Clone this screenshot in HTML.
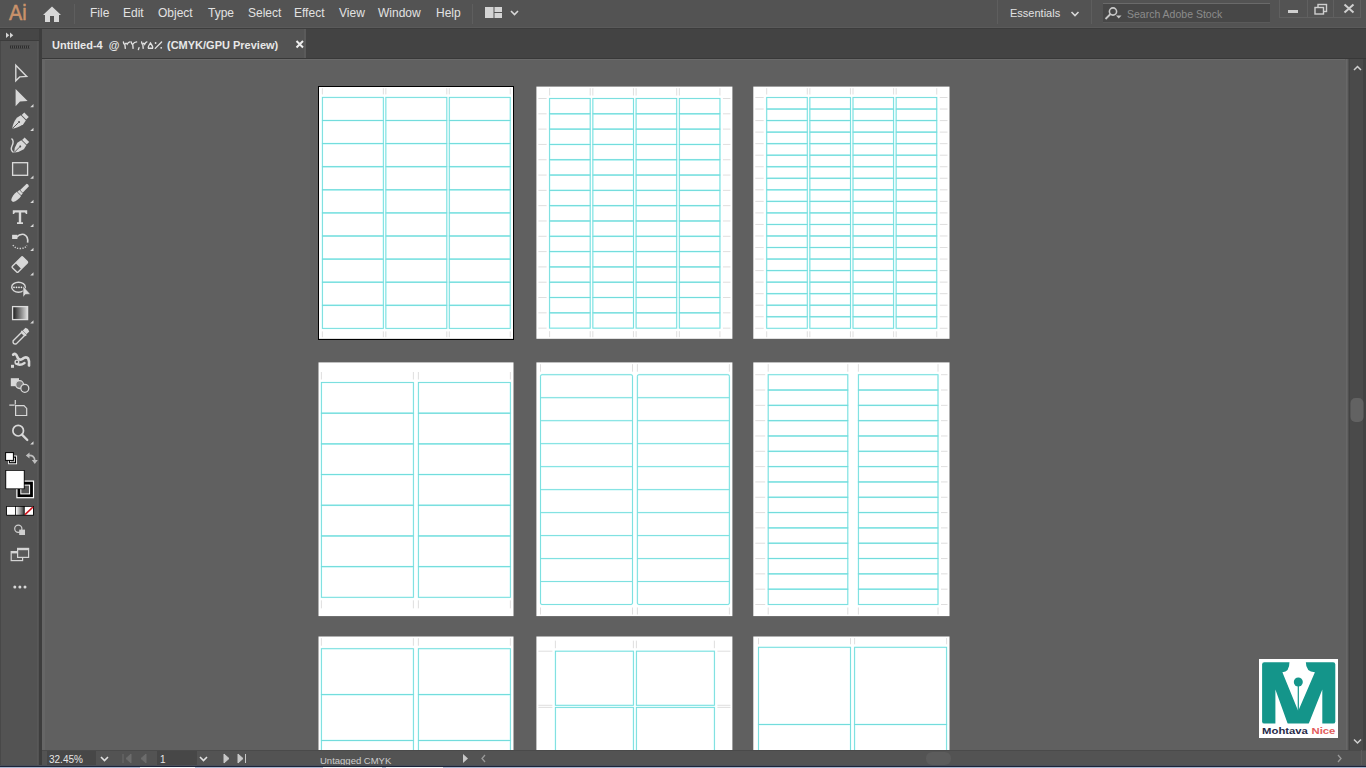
<!DOCTYPE html>
<html><head><meta charset="utf-8">
<style>
*{margin:0;padding:0;box-sizing:border-box}
html,body{width:1366px;height:768px;overflow:hidden;background:#606060;font-family:"Liberation Sans",sans-serif}
.a{position:absolute}
.t{position:absolute;white-space:nowrap;color:#e2e2e2;font-size:12px;line-height:12px}
</style></head><body>
<svg class="a" style="left:0;top:0" width="1366" height="768" viewBox="0 0 1366 768"><g fill="#fff"><rect x="318.5" y="86.6" width="195.00" height="252.20"/><rect x="536.4" y="86.6" width="196.00" height="252.20"/><rect x="753.3" y="86.6" width="196.20" height="252.20"/><rect x="318.5" y="362.4" width="195.00" height="253.70"/><rect x="536.4" y="362.4" width="196.00" height="253.70"/><rect x="753.3" y="362.4" width="196.20" height="253.70"/><rect x="318.5" y="636.5" width="195.00" height="263.50"/><rect x="536.4" y="636.5" width="196.00" height="263.50"/><rect x="753.3" y="636.5" width="196.20" height="263.50"/></g><rect x="318.5" y="86.5" width="195" height="253" fill="none" stroke="#000" stroke-width="1"/><path fill="none" stroke="#d6d6d6" stroke-width="0.8" d="M322.40 88.20V94.40M322.40 331.40V337.20M383.35 88.20V94.40M383.35 331.40V337.20M385.85 88.20V94.40M385.85 331.40V337.20M446.80 88.20V94.40M446.80 331.40V337.20M449.30 88.20V94.40M449.30 331.40V337.20M510.25 88.20V94.40M510.25 331.40V337.20M549.60 88.20V95.50M549.60 331.15V337.20M590.20 88.20V95.50M590.20 331.15V337.20M592.85 88.20V95.50M592.85 331.15V337.20M633.45 88.20V95.50M633.45 331.15V337.20M636.10 88.20V95.50M636.10 331.15V337.20M676.70 88.20V95.50M676.70 331.15V337.20M679.35 88.20V95.50M679.35 331.15V337.20M719.95 88.20V95.50M719.95 331.15V337.20M538.40 98.50H546.60M722.95 98.50H730.40M538.40 113.81H546.60M722.95 113.81H730.40M538.40 129.12H546.60M722.95 129.12H730.40M538.40 144.43H546.60M722.95 144.43H730.40M538.40 159.74H546.60M722.95 159.74H730.40M538.40 175.05H546.60M722.95 175.05H730.40M538.40 190.36H546.60M722.95 190.36H730.40M538.40 205.67H546.60M722.95 205.67H730.40M538.40 220.98H546.60M722.95 220.98H730.40M538.40 236.29H546.60M722.95 236.29H730.40M538.40 251.60H546.60M722.95 251.60H730.40M538.40 266.91H546.60M722.95 266.91H730.40M538.40 282.22H546.60M722.95 282.22H730.40M538.40 297.53H546.60M722.95 297.53H730.40M538.40 312.84H546.60M722.95 312.84H730.40M538.40 328.15H546.60M722.95 328.15H730.40M766.70 88.20V94.50M766.70 331.30V337.20M807.30 88.20V94.50M807.30 331.30V337.20M809.85 88.20V94.50M809.85 331.30V337.20M850.45 88.20V94.50M850.45 331.30V337.20M853.00 88.20V94.50M853.00 331.30V337.20M893.60 88.20V94.50M893.60 331.30V337.20M896.15 88.20V94.50M896.15 331.30V337.20M936.75 88.20V94.50M936.75 331.30V337.20M755.30 97.50H763.70M939.75 97.50H947.50M755.30 109.04H763.70M939.75 109.04H947.50M755.30 120.58H763.70M939.75 120.58H947.50M755.30 132.12H763.70M939.75 132.12H947.50M755.30 143.66H763.70M939.75 143.66H947.50M755.30 155.20H763.70M939.75 155.20H947.50M755.30 166.74H763.70M939.75 166.74H947.50M755.30 178.28H763.70M939.75 178.28H947.50M755.30 189.82H763.70M939.75 189.82H947.50M755.30 201.36H763.70M939.75 201.36H947.50M755.30 212.90H763.70M939.75 212.90H947.50M755.30 224.44H763.70M939.75 224.44H947.50M755.30 235.98H763.70M939.75 235.98H947.50M755.30 247.52H763.70M939.75 247.52H947.50M755.30 259.06H763.70M939.75 259.06H947.50M755.30 270.60H763.70M939.75 270.60H947.50M755.30 282.14H763.70M939.75 282.14H947.50M755.30 293.68H763.70M939.75 293.68H947.50M755.30 305.22H763.70M939.75 305.22H947.50M755.30 316.76H763.70M939.75 316.76H947.50M755.30 328.30H763.70M939.75 328.30H947.50M321.40 372.00V379.50M321.40 600.33V608.33M413.40 372.00V379.50M413.40 600.33V608.33M418.40 372.00V379.50M418.40 600.33V608.33M510.40 372.00V379.50M510.40 600.33V608.33M540.50 364.20V371.70M540.50 607.50V614.50M632.50 364.20V371.70M632.50 607.50V614.50M637.40 364.20V371.70M637.40 607.50V614.50M729.40 364.20V371.70M729.40 607.50V614.50M768.20 364.20V371.70M768.20 607.50V614.50M847.80 364.20V371.70M847.80 607.50V614.50M858.40 364.20V371.70M858.40 607.50V614.50M938.00 364.20V371.70M938.00 607.50V614.50M755.30 374.70H765.20M941.00 374.70H947.50M755.30 390.02H765.20M941.00 390.02H947.50M755.30 405.34H765.20M941.00 405.34H947.50M755.30 420.66H765.20M941.00 420.66H947.50M755.30 435.98H765.20M941.00 435.98H947.50M755.30 451.30H765.20M941.00 451.30H947.50M755.30 466.62H765.20M941.00 466.62H947.50M755.30 481.94H765.20M941.00 481.94H947.50M755.30 497.26H765.20M941.00 497.26H947.50M755.30 512.58H765.20M941.00 512.58H947.50M755.30 527.90H765.20M941.00 527.90H947.50M755.30 543.22H765.20M941.00 543.22H947.50M755.30 558.54H765.20M941.00 558.54H947.50M755.30 573.86H765.20M941.00 573.86H947.50M755.30 589.18H765.20M941.00 589.18H947.50M755.30 604.50H765.20M941.00 604.50H947.50M321.40 638.20V645.70M413.40 638.20V645.70M418.40 638.20V645.70M510.40 638.20V645.70M555.40 640.70V648.20M633.40 640.70V648.20M636.40 640.70V648.20M714.40 640.70V648.20M538.40 651.20H552.40M717.40 651.20H730.40M538.40 705.30H552.40M717.40 705.30H730.40M538.40 707.40H552.40M717.40 707.40H730.40M538.40 761.50H552.40M717.40 761.50H730.40M758.50 638.10V644.30M850.50 638.10V644.30M854.60 638.10V644.30M946.60 638.10V644.30"/><g fill="none" stroke="#dcfcfc" stroke-width="1.7"><rect x="322.40" y="97.40" width="60.95" height="23.10"/><rect x="322.40" y="120.50" width="60.95" height="23.10"/><rect x="322.40" y="143.60" width="60.95" height="23.10"/><rect x="322.40" y="166.70" width="60.95" height="23.10"/><rect x="322.40" y="189.80" width="60.95" height="23.10"/><rect x="322.40" y="212.90" width="60.95" height="23.10"/><rect x="322.40" y="236.00" width="60.95" height="23.10"/><rect x="322.40" y="259.10" width="60.95" height="23.10"/><rect x="322.40" y="282.20" width="60.95" height="23.10"/><rect x="322.40" y="305.30" width="60.95" height="23.10"/><rect x="385.85" y="97.40" width="60.95" height="23.10"/><rect x="385.85" y="120.50" width="60.95" height="23.10"/><rect x="385.85" y="143.60" width="60.95" height="23.10"/><rect x="385.85" y="166.70" width="60.95" height="23.10"/><rect x="385.85" y="189.80" width="60.95" height="23.10"/><rect x="385.85" y="212.90" width="60.95" height="23.10"/><rect x="385.85" y="236.00" width="60.95" height="23.10"/><rect x="385.85" y="259.10" width="60.95" height="23.10"/><rect x="385.85" y="282.20" width="60.95" height="23.10"/><rect x="385.85" y="305.30" width="60.95" height="23.10"/><rect x="449.30" y="97.40" width="60.95" height="23.10"/><rect x="449.30" y="120.50" width="60.95" height="23.10"/><rect x="449.30" y="143.60" width="60.95" height="23.10"/><rect x="449.30" y="166.70" width="60.95" height="23.10"/><rect x="449.30" y="189.80" width="60.95" height="23.10"/><rect x="449.30" y="212.90" width="60.95" height="23.10"/><rect x="449.30" y="236.00" width="60.95" height="23.10"/><rect x="449.30" y="259.10" width="60.95" height="23.10"/><rect x="449.30" y="282.20" width="60.95" height="23.10"/><rect x="449.30" y="305.30" width="60.95" height="23.10"/><rect x="549.60" y="98.50" width="40.60" height="15.31"/><rect x="549.60" y="113.81" width="40.60" height="15.31"/><rect x="549.60" y="129.12" width="40.60" height="15.31"/><rect x="549.60" y="144.43" width="40.60" height="15.31"/><rect x="549.60" y="159.74" width="40.60" height="15.31"/><rect x="549.60" y="175.05" width="40.60" height="15.31"/><rect x="549.60" y="190.36" width="40.60" height="15.31"/><rect x="549.60" y="205.67" width="40.60" height="15.31"/><rect x="549.60" y="220.98" width="40.60" height="15.31"/><rect x="549.60" y="236.29" width="40.60" height="15.31"/><rect x="549.60" y="251.60" width="40.60" height="15.31"/><rect x="549.60" y="266.91" width="40.60" height="15.31"/><rect x="549.60" y="282.22" width="40.60" height="15.31"/><rect x="549.60" y="297.53" width="40.60" height="15.31"/><rect x="549.60" y="312.84" width="40.60" height="15.31"/><rect x="592.85" y="98.50" width="40.60" height="15.31"/><rect x="592.85" y="113.81" width="40.60" height="15.31"/><rect x="592.85" y="129.12" width="40.60" height="15.31"/><rect x="592.85" y="144.43" width="40.60" height="15.31"/><rect x="592.85" y="159.74" width="40.60" height="15.31"/><rect x="592.85" y="175.05" width="40.60" height="15.31"/><rect x="592.85" y="190.36" width="40.60" height="15.31"/><rect x="592.85" y="205.67" width="40.60" height="15.31"/><rect x="592.85" y="220.98" width="40.60" height="15.31"/><rect x="592.85" y="236.29" width="40.60" height="15.31"/><rect x="592.85" y="251.60" width="40.60" height="15.31"/><rect x="592.85" y="266.91" width="40.60" height="15.31"/><rect x="592.85" y="282.22" width="40.60" height="15.31"/><rect x="592.85" y="297.53" width="40.60" height="15.31"/><rect x="592.85" y="312.84" width="40.60" height="15.31"/><rect x="636.10" y="98.50" width="40.60" height="15.31"/><rect x="636.10" y="113.81" width="40.60" height="15.31"/><rect x="636.10" y="129.12" width="40.60" height="15.31"/><rect x="636.10" y="144.43" width="40.60" height="15.31"/><rect x="636.10" y="159.74" width="40.60" height="15.31"/><rect x="636.10" y="175.05" width="40.60" height="15.31"/><rect x="636.10" y="190.36" width="40.60" height="15.31"/><rect x="636.10" y="205.67" width="40.60" height="15.31"/><rect x="636.10" y="220.98" width="40.60" height="15.31"/><rect x="636.10" y="236.29" width="40.60" height="15.31"/><rect x="636.10" y="251.60" width="40.60" height="15.31"/><rect x="636.10" y="266.91" width="40.60" height="15.31"/><rect x="636.10" y="282.22" width="40.60" height="15.31"/><rect x="636.10" y="297.53" width="40.60" height="15.31"/><rect x="636.10" y="312.84" width="40.60" height="15.31"/><rect x="679.35" y="98.50" width="40.60" height="15.31"/><rect x="679.35" y="113.81" width="40.60" height="15.31"/><rect x="679.35" y="129.12" width="40.60" height="15.31"/><rect x="679.35" y="144.43" width="40.60" height="15.31"/><rect x="679.35" y="159.74" width="40.60" height="15.31"/><rect x="679.35" y="175.05" width="40.60" height="15.31"/><rect x="679.35" y="190.36" width="40.60" height="15.31"/><rect x="679.35" y="205.67" width="40.60" height="15.31"/><rect x="679.35" y="220.98" width="40.60" height="15.31"/><rect x="679.35" y="236.29" width="40.60" height="15.31"/><rect x="679.35" y="251.60" width="40.60" height="15.31"/><rect x="679.35" y="266.91" width="40.60" height="15.31"/><rect x="679.35" y="282.22" width="40.60" height="15.31"/><rect x="679.35" y="297.53" width="40.60" height="15.31"/><rect x="679.35" y="312.84" width="40.60" height="15.31"/><rect x="766.70" y="97.50" width="40.60" height="11.54"/><rect x="766.70" y="109.04" width="40.60" height="11.54"/><rect x="766.70" y="120.58" width="40.60" height="11.54"/><rect x="766.70" y="132.12" width="40.60" height="11.54"/><rect x="766.70" y="143.66" width="40.60" height="11.54"/><rect x="766.70" y="155.20" width="40.60" height="11.54"/><rect x="766.70" y="166.74" width="40.60" height="11.54"/><rect x="766.70" y="178.28" width="40.60" height="11.54"/><rect x="766.70" y="189.82" width="40.60" height="11.54"/><rect x="766.70" y="201.36" width="40.60" height="11.54"/><rect x="766.70" y="212.90" width="40.60" height="11.54"/><rect x="766.70" y="224.44" width="40.60" height="11.54"/><rect x="766.70" y="235.98" width="40.60" height="11.54"/><rect x="766.70" y="247.52" width="40.60" height="11.54"/><rect x="766.70" y="259.06" width="40.60" height="11.54"/><rect x="766.70" y="270.60" width="40.60" height="11.54"/><rect x="766.70" y="282.14" width="40.60" height="11.54"/><rect x="766.70" y="293.68" width="40.60" height="11.54"/><rect x="766.70" y="305.22" width="40.60" height="11.54"/><rect x="766.70" y="316.76" width="40.60" height="11.54"/><rect x="809.85" y="97.50" width="40.60" height="11.54"/><rect x="809.85" y="109.04" width="40.60" height="11.54"/><rect x="809.85" y="120.58" width="40.60" height="11.54"/><rect x="809.85" y="132.12" width="40.60" height="11.54"/><rect x="809.85" y="143.66" width="40.60" height="11.54"/><rect x="809.85" y="155.20" width="40.60" height="11.54"/><rect x="809.85" y="166.74" width="40.60" height="11.54"/><rect x="809.85" y="178.28" width="40.60" height="11.54"/><rect x="809.85" y="189.82" width="40.60" height="11.54"/><rect x="809.85" y="201.36" width="40.60" height="11.54"/><rect x="809.85" y="212.90" width="40.60" height="11.54"/><rect x="809.85" y="224.44" width="40.60" height="11.54"/><rect x="809.85" y="235.98" width="40.60" height="11.54"/><rect x="809.85" y="247.52" width="40.60" height="11.54"/><rect x="809.85" y="259.06" width="40.60" height="11.54"/><rect x="809.85" y="270.60" width="40.60" height="11.54"/><rect x="809.85" y="282.14" width="40.60" height="11.54"/><rect x="809.85" y="293.68" width="40.60" height="11.54"/><rect x="809.85" y="305.22" width="40.60" height="11.54"/><rect x="809.85" y="316.76" width="40.60" height="11.54"/><rect x="853.00" y="97.50" width="40.60" height="11.54"/><rect x="853.00" y="109.04" width="40.60" height="11.54"/><rect x="853.00" y="120.58" width="40.60" height="11.54"/><rect x="853.00" y="132.12" width="40.60" height="11.54"/><rect x="853.00" y="143.66" width="40.60" height="11.54"/><rect x="853.00" y="155.20" width="40.60" height="11.54"/><rect x="853.00" y="166.74" width="40.60" height="11.54"/><rect x="853.00" y="178.28" width="40.60" height="11.54"/><rect x="853.00" y="189.82" width="40.60" height="11.54"/><rect x="853.00" y="201.36" width="40.60" height="11.54"/><rect x="853.00" y="212.90" width="40.60" height="11.54"/><rect x="853.00" y="224.44" width="40.60" height="11.54"/><rect x="853.00" y="235.98" width="40.60" height="11.54"/><rect x="853.00" y="247.52" width="40.60" height="11.54"/><rect x="853.00" y="259.06" width="40.60" height="11.54"/><rect x="853.00" y="270.60" width="40.60" height="11.54"/><rect x="853.00" y="282.14" width="40.60" height="11.54"/><rect x="853.00" y="293.68" width="40.60" height="11.54"/><rect x="853.00" y="305.22" width="40.60" height="11.54"/><rect x="853.00" y="316.76" width="40.60" height="11.54"/><rect x="896.15" y="97.50" width="40.60" height="11.54"/><rect x="896.15" y="109.04" width="40.60" height="11.54"/><rect x="896.15" y="120.58" width="40.60" height="11.54"/><rect x="896.15" y="132.12" width="40.60" height="11.54"/><rect x="896.15" y="143.66" width="40.60" height="11.54"/><rect x="896.15" y="155.20" width="40.60" height="11.54"/><rect x="896.15" y="166.74" width="40.60" height="11.54"/><rect x="896.15" y="178.28" width="40.60" height="11.54"/><rect x="896.15" y="189.82" width="40.60" height="11.54"/><rect x="896.15" y="201.36" width="40.60" height="11.54"/><rect x="896.15" y="212.90" width="40.60" height="11.54"/><rect x="896.15" y="224.44" width="40.60" height="11.54"/><rect x="896.15" y="235.98" width="40.60" height="11.54"/><rect x="896.15" y="247.52" width="40.60" height="11.54"/><rect x="896.15" y="259.06" width="40.60" height="11.54"/><rect x="896.15" y="270.60" width="40.60" height="11.54"/><rect x="896.15" y="282.14" width="40.60" height="11.54"/><rect x="896.15" y="293.68" width="40.60" height="11.54"/><rect x="896.15" y="305.22" width="40.60" height="11.54"/><rect x="896.15" y="316.76" width="40.60" height="11.54"/><rect x="321.40" y="382.50" width="92.00" height="30.69"/><rect x="321.40" y="413.19" width="92.00" height="30.69"/><rect x="321.40" y="443.88" width="92.00" height="30.69"/><rect x="321.40" y="474.57" width="92.00" height="30.69"/><rect x="321.40" y="505.26" width="92.00" height="30.69"/><rect x="321.40" y="535.95" width="92.00" height="30.69"/><rect x="321.40" y="566.64" width="92.00" height="30.69"/><rect x="418.40" y="382.50" width="92.00" height="30.69"/><rect x="418.40" y="413.19" width="92.00" height="30.69"/><rect x="418.40" y="443.88" width="92.00" height="30.69"/><rect x="418.40" y="474.57" width="92.00" height="30.69"/><rect x="418.40" y="505.26" width="92.00" height="30.69"/><rect x="418.40" y="535.95" width="92.00" height="30.69"/><rect x="418.40" y="566.64" width="92.00" height="30.69"/><rect x="540.50" y="374.70" width="92.00" height="229.80" rx="1.5"/><path d="M540.50 397.68H632.50"/><path d="M540.50 420.66H632.50"/><path d="M540.50 443.64H632.50"/><path d="M540.50 466.62H632.50"/><path d="M540.50 489.60H632.50"/><path d="M540.50 512.58H632.50"/><path d="M540.50 535.56H632.50"/><path d="M540.50 558.54H632.50"/><path d="M540.50 581.52H632.50"/><rect x="637.40" y="374.70" width="92.00" height="229.80" rx="1.5"/><path d="M637.40 397.68H729.40"/><path d="M637.40 420.66H729.40"/><path d="M637.40 443.64H729.40"/><path d="M637.40 466.62H729.40"/><path d="M637.40 489.60H729.40"/><path d="M637.40 512.58H729.40"/><path d="M637.40 535.56H729.40"/><path d="M637.40 558.54H729.40"/><path d="M637.40 581.52H729.40"/><rect x="768.20" y="374.70" width="79.60" height="15.32"/><rect x="768.20" y="390.02" width="79.60" height="15.32"/><rect x="768.20" y="405.34" width="79.60" height="15.32"/><rect x="768.20" y="420.66" width="79.60" height="15.32"/><rect x="768.20" y="435.98" width="79.60" height="15.32"/><rect x="768.20" y="451.30" width="79.60" height="15.32"/><rect x="768.20" y="466.62" width="79.60" height="15.32"/><rect x="768.20" y="481.94" width="79.60" height="15.32"/><rect x="768.20" y="497.26" width="79.60" height="15.32"/><rect x="768.20" y="512.58" width="79.60" height="15.32"/><rect x="768.20" y="527.90" width="79.60" height="15.32"/><rect x="768.20" y="543.22" width="79.60" height="15.32"/><rect x="768.20" y="558.54" width="79.60" height="15.32"/><rect x="768.20" y="573.86" width="79.60" height="15.32"/><rect x="768.20" y="589.18" width="79.60" height="15.32"/><rect x="858.40" y="374.70" width="79.60" height="15.32"/><rect x="858.40" y="390.02" width="79.60" height="15.32"/><rect x="858.40" y="405.34" width="79.60" height="15.32"/><rect x="858.40" y="420.66" width="79.60" height="15.32"/><rect x="858.40" y="435.98" width="79.60" height="15.32"/><rect x="858.40" y="451.30" width="79.60" height="15.32"/><rect x="858.40" y="466.62" width="79.60" height="15.32"/><rect x="858.40" y="481.94" width="79.60" height="15.32"/><rect x="858.40" y="497.26" width="79.60" height="15.32"/><rect x="858.40" y="512.58" width="79.60" height="15.32"/><rect x="858.40" y="527.90" width="79.60" height="15.32"/><rect x="858.40" y="543.22" width="79.60" height="15.32"/><rect x="858.40" y="558.54" width="79.60" height="15.32"/><rect x="858.40" y="573.86" width="79.60" height="15.32"/><rect x="858.40" y="589.18" width="79.60" height="15.32"/><rect x="321.40" y="648.70" width="92.00" height="45.90"/><rect x="321.40" y="694.60" width="92.00" height="45.90"/><rect x="321.40" y="740.50" width="92.00" height="45.90"/><rect x="418.40" y="648.70" width="92.00" height="45.90"/><rect x="418.40" y="694.60" width="92.00" height="45.90"/><rect x="418.40" y="740.50" width="92.00" height="45.90"/><rect x="555.40" y="651.20" width="78.00" height="54.10"/><rect x="555.40" y="707.40" width="78.00" height="54.10"/><rect x="636.40" y="651.20" width="78.00" height="54.10"/><rect x="636.40" y="707.40" width="78.00" height="54.10"/><rect x="758.50" y="647.30" width="92.00" height="77.20"/><rect x="758.50" y="724.50" width="92.00" height="77.20"/><rect x="854.60" y="647.30" width="92.00" height="77.20"/><rect x="854.60" y="724.50" width="92.00" height="77.20"/></g><g fill="none" stroke="#72dcdc" stroke-width="0.9"><rect x="322.40" y="97.40" width="60.95" height="23.10"/><rect x="322.40" y="120.50" width="60.95" height="23.10"/><rect x="322.40" y="143.60" width="60.95" height="23.10"/><rect x="322.40" y="166.70" width="60.95" height="23.10"/><rect x="322.40" y="189.80" width="60.95" height="23.10"/><rect x="322.40" y="212.90" width="60.95" height="23.10"/><rect x="322.40" y="236.00" width="60.95" height="23.10"/><rect x="322.40" y="259.10" width="60.95" height="23.10"/><rect x="322.40" y="282.20" width="60.95" height="23.10"/><rect x="322.40" y="305.30" width="60.95" height="23.10"/><rect x="385.85" y="97.40" width="60.95" height="23.10"/><rect x="385.85" y="120.50" width="60.95" height="23.10"/><rect x="385.85" y="143.60" width="60.95" height="23.10"/><rect x="385.85" y="166.70" width="60.95" height="23.10"/><rect x="385.85" y="189.80" width="60.95" height="23.10"/><rect x="385.85" y="212.90" width="60.95" height="23.10"/><rect x="385.85" y="236.00" width="60.95" height="23.10"/><rect x="385.85" y="259.10" width="60.95" height="23.10"/><rect x="385.85" y="282.20" width="60.95" height="23.10"/><rect x="385.85" y="305.30" width="60.95" height="23.10"/><rect x="449.30" y="97.40" width="60.95" height="23.10"/><rect x="449.30" y="120.50" width="60.95" height="23.10"/><rect x="449.30" y="143.60" width="60.95" height="23.10"/><rect x="449.30" y="166.70" width="60.95" height="23.10"/><rect x="449.30" y="189.80" width="60.95" height="23.10"/><rect x="449.30" y="212.90" width="60.95" height="23.10"/><rect x="449.30" y="236.00" width="60.95" height="23.10"/><rect x="449.30" y="259.10" width="60.95" height="23.10"/><rect x="449.30" y="282.20" width="60.95" height="23.10"/><rect x="449.30" y="305.30" width="60.95" height="23.10"/><rect x="549.60" y="98.50" width="40.60" height="15.31"/><rect x="549.60" y="113.81" width="40.60" height="15.31"/><rect x="549.60" y="129.12" width="40.60" height="15.31"/><rect x="549.60" y="144.43" width="40.60" height="15.31"/><rect x="549.60" y="159.74" width="40.60" height="15.31"/><rect x="549.60" y="175.05" width="40.60" height="15.31"/><rect x="549.60" y="190.36" width="40.60" height="15.31"/><rect x="549.60" y="205.67" width="40.60" height="15.31"/><rect x="549.60" y="220.98" width="40.60" height="15.31"/><rect x="549.60" y="236.29" width="40.60" height="15.31"/><rect x="549.60" y="251.60" width="40.60" height="15.31"/><rect x="549.60" y="266.91" width="40.60" height="15.31"/><rect x="549.60" y="282.22" width="40.60" height="15.31"/><rect x="549.60" y="297.53" width="40.60" height="15.31"/><rect x="549.60" y="312.84" width="40.60" height="15.31"/><rect x="592.85" y="98.50" width="40.60" height="15.31"/><rect x="592.85" y="113.81" width="40.60" height="15.31"/><rect x="592.85" y="129.12" width="40.60" height="15.31"/><rect x="592.85" y="144.43" width="40.60" height="15.31"/><rect x="592.85" y="159.74" width="40.60" height="15.31"/><rect x="592.85" y="175.05" width="40.60" height="15.31"/><rect x="592.85" y="190.36" width="40.60" height="15.31"/><rect x="592.85" y="205.67" width="40.60" height="15.31"/><rect x="592.85" y="220.98" width="40.60" height="15.31"/><rect x="592.85" y="236.29" width="40.60" height="15.31"/><rect x="592.85" y="251.60" width="40.60" height="15.31"/><rect x="592.85" y="266.91" width="40.60" height="15.31"/><rect x="592.85" y="282.22" width="40.60" height="15.31"/><rect x="592.85" y="297.53" width="40.60" height="15.31"/><rect x="592.85" y="312.84" width="40.60" height="15.31"/><rect x="636.10" y="98.50" width="40.60" height="15.31"/><rect x="636.10" y="113.81" width="40.60" height="15.31"/><rect x="636.10" y="129.12" width="40.60" height="15.31"/><rect x="636.10" y="144.43" width="40.60" height="15.31"/><rect x="636.10" y="159.74" width="40.60" height="15.31"/><rect x="636.10" y="175.05" width="40.60" height="15.31"/><rect x="636.10" y="190.36" width="40.60" height="15.31"/><rect x="636.10" y="205.67" width="40.60" height="15.31"/><rect x="636.10" y="220.98" width="40.60" height="15.31"/><rect x="636.10" y="236.29" width="40.60" height="15.31"/><rect x="636.10" y="251.60" width="40.60" height="15.31"/><rect x="636.10" y="266.91" width="40.60" height="15.31"/><rect x="636.10" y="282.22" width="40.60" height="15.31"/><rect x="636.10" y="297.53" width="40.60" height="15.31"/><rect x="636.10" y="312.84" width="40.60" height="15.31"/><rect x="679.35" y="98.50" width="40.60" height="15.31"/><rect x="679.35" y="113.81" width="40.60" height="15.31"/><rect x="679.35" y="129.12" width="40.60" height="15.31"/><rect x="679.35" y="144.43" width="40.60" height="15.31"/><rect x="679.35" y="159.74" width="40.60" height="15.31"/><rect x="679.35" y="175.05" width="40.60" height="15.31"/><rect x="679.35" y="190.36" width="40.60" height="15.31"/><rect x="679.35" y="205.67" width="40.60" height="15.31"/><rect x="679.35" y="220.98" width="40.60" height="15.31"/><rect x="679.35" y="236.29" width="40.60" height="15.31"/><rect x="679.35" y="251.60" width="40.60" height="15.31"/><rect x="679.35" y="266.91" width="40.60" height="15.31"/><rect x="679.35" y="282.22" width="40.60" height="15.31"/><rect x="679.35" y="297.53" width="40.60" height="15.31"/><rect x="679.35" y="312.84" width="40.60" height="15.31"/><rect x="766.70" y="97.50" width="40.60" height="11.54"/><rect x="766.70" y="109.04" width="40.60" height="11.54"/><rect x="766.70" y="120.58" width="40.60" height="11.54"/><rect x="766.70" y="132.12" width="40.60" height="11.54"/><rect x="766.70" y="143.66" width="40.60" height="11.54"/><rect x="766.70" y="155.20" width="40.60" height="11.54"/><rect x="766.70" y="166.74" width="40.60" height="11.54"/><rect x="766.70" y="178.28" width="40.60" height="11.54"/><rect x="766.70" y="189.82" width="40.60" height="11.54"/><rect x="766.70" y="201.36" width="40.60" height="11.54"/><rect x="766.70" y="212.90" width="40.60" height="11.54"/><rect x="766.70" y="224.44" width="40.60" height="11.54"/><rect x="766.70" y="235.98" width="40.60" height="11.54"/><rect x="766.70" y="247.52" width="40.60" height="11.54"/><rect x="766.70" y="259.06" width="40.60" height="11.54"/><rect x="766.70" y="270.60" width="40.60" height="11.54"/><rect x="766.70" y="282.14" width="40.60" height="11.54"/><rect x="766.70" y="293.68" width="40.60" height="11.54"/><rect x="766.70" y="305.22" width="40.60" height="11.54"/><rect x="766.70" y="316.76" width="40.60" height="11.54"/><rect x="809.85" y="97.50" width="40.60" height="11.54"/><rect x="809.85" y="109.04" width="40.60" height="11.54"/><rect x="809.85" y="120.58" width="40.60" height="11.54"/><rect x="809.85" y="132.12" width="40.60" height="11.54"/><rect x="809.85" y="143.66" width="40.60" height="11.54"/><rect x="809.85" y="155.20" width="40.60" height="11.54"/><rect x="809.85" y="166.74" width="40.60" height="11.54"/><rect x="809.85" y="178.28" width="40.60" height="11.54"/><rect x="809.85" y="189.82" width="40.60" height="11.54"/><rect x="809.85" y="201.36" width="40.60" height="11.54"/><rect x="809.85" y="212.90" width="40.60" height="11.54"/><rect x="809.85" y="224.44" width="40.60" height="11.54"/><rect x="809.85" y="235.98" width="40.60" height="11.54"/><rect x="809.85" y="247.52" width="40.60" height="11.54"/><rect x="809.85" y="259.06" width="40.60" height="11.54"/><rect x="809.85" y="270.60" width="40.60" height="11.54"/><rect x="809.85" y="282.14" width="40.60" height="11.54"/><rect x="809.85" y="293.68" width="40.60" height="11.54"/><rect x="809.85" y="305.22" width="40.60" height="11.54"/><rect x="809.85" y="316.76" width="40.60" height="11.54"/><rect x="853.00" y="97.50" width="40.60" height="11.54"/><rect x="853.00" y="109.04" width="40.60" height="11.54"/><rect x="853.00" y="120.58" width="40.60" height="11.54"/><rect x="853.00" y="132.12" width="40.60" height="11.54"/><rect x="853.00" y="143.66" width="40.60" height="11.54"/><rect x="853.00" y="155.20" width="40.60" height="11.54"/><rect x="853.00" y="166.74" width="40.60" height="11.54"/><rect x="853.00" y="178.28" width="40.60" height="11.54"/><rect x="853.00" y="189.82" width="40.60" height="11.54"/><rect x="853.00" y="201.36" width="40.60" height="11.54"/><rect x="853.00" y="212.90" width="40.60" height="11.54"/><rect x="853.00" y="224.44" width="40.60" height="11.54"/><rect x="853.00" y="235.98" width="40.60" height="11.54"/><rect x="853.00" y="247.52" width="40.60" height="11.54"/><rect x="853.00" y="259.06" width="40.60" height="11.54"/><rect x="853.00" y="270.60" width="40.60" height="11.54"/><rect x="853.00" y="282.14" width="40.60" height="11.54"/><rect x="853.00" y="293.68" width="40.60" height="11.54"/><rect x="853.00" y="305.22" width="40.60" height="11.54"/><rect x="853.00" y="316.76" width="40.60" height="11.54"/><rect x="896.15" y="97.50" width="40.60" height="11.54"/><rect x="896.15" y="109.04" width="40.60" height="11.54"/><rect x="896.15" y="120.58" width="40.60" height="11.54"/><rect x="896.15" y="132.12" width="40.60" height="11.54"/><rect x="896.15" y="143.66" width="40.60" height="11.54"/><rect x="896.15" y="155.20" width="40.60" height="11.54"/><rect x="896.15" y="166.74" width="40.60" height="11.54"/><rect x="896.15" y="178.28" width="40.60" height="11.54"/><rect x="896.15" y="189.82" width="40.60" height="11.54"/><rect x="896.15" y="201.36" width="40.60" height="11.54"/><rect x="896.15" y="212.90" width="40.60" height="11.54"/><rect x="896.15" y="224.44" width="40.60" height="11.54"/><rect x="896.15" y="235.98" width="40.60" height="11.54"/><rect x="896.15" y="247.52" width="40.60" height="11.54"/><rect x="896.15" y="259.06" width="40.60" height="11.54"/><rect x="896.15" y="270.60" width="40.60" height="11.54"/><rect x="896.15" y="282.14" width="40.60" height="11.54"/><rect x="896.15" y="293.68" width="40.60" height="11.54"/><rect x="896.15" y="305.22" width="40.60" height="11.54"/><rect x="896.15" y="316.76" width="40.60" height="11.54"/><rect x="321.40" y="382.50" width="92.00" height="30.69"/><rect x="321.40" y="413.19" width="92.00" height="30.69"/><rect x="321.40" y="443.88" width="92.00" height="30.69"/><rect x="321.40" y="474.57" width="92.00" height="30.69"/><rect x="321.40" y="505.26" width="92.00" height="30.69"/><rect x="321.40" y="535.95" width="92.00" height="30.69"/><rect x="321.40" y="566.64" width="92.00" height="30.69"/><rect x="418.40" y="382.50" width="92.00" height="30.69"/><rect x="418.40" y="413.19" width="92.00" height="30.69"/><rect x="418.40" y="443.88" width="92.00" height="30.69"/><rect x="418.40" y="474.57" width="92.00" height="30.69"/><rect x="418.40" y="505.26" width="92.00" height="30.69"/><rect x="418.40" y="535.95" width="92.00" height="30.69"/><rect x="418.40" y="566.64" width="92.00" height="30.69"/><rect x="540.50" y="374.70" width="92.00" height="229.80" rx="1.5"/><path d="M540.50 397.68H632.50"/><path d="M540.50 420.66H632.50"/><path d="M540.50 443.64H632.50"/><path d="M540.50 466.62H632.50"/><path d="M540.50 489.60H632.50"/><path d="M540.50 512.58H632.50"/><path d="M540.50 535.56H632.50"/><path d="M540.50 558.54H632.50"/><path d="M540.50 581.52H632.50"/><rect x="637.40" y="374.70" width="92.00" height="229.80" rx="1.5"/><path d="M637.40 397.68H729.40"/><path d="M637.40 420.66H729.40"/><path d="M637.40 443.64H729.40"/><path d="M637.40 466.62H729.40"/><path d="M637.40 489.60H729.40"/><path d="M637.40 512.58H729.40"/><path d="M637.40 535.56H729.40"/><path d="M637.40 558.54H729.40"/><path d="M637.40 581.52H729.40"/><rect x="768.20" y="374.70" width="79.60" height="15.32"/><rect x="768.20" y="390.02" width="79.60" height="15.32"/><rect x="768.20" y="405.34" width="79.60" height="15.32"/><rect x="768.20" y="420.66" width="79.60" height="15.32"/><rect x="768.20" y="435.98" width="79.60" height="15.32"/><rect x="768.20" y="451.30" width="79.60" height="15.32"/><rect x="768.20" y="466.62" width="79.60" height="15.32"/><rect x="768.20" y="481.94" width="79.60" height="15.32"/><rect x="768.20" y="497.26" width="79.60" height="15.32"/><rect x="768.20" y="512.58" width="79.60" height="15.32"/><rect x="768.20" y="527.90" width="79.60" height="15.32"/><rect x="768.20" y="543.22" width="79.60" height="15.32"/><rect x="768.20" y="558.54" width="79.60" height="15.32"/><rect x="768.20" y="573.86" width="79.60" height="15.32"/><rect x="768.20" y="589.18" width="79.60" height="15.32"/><rect x="858.40" y="374.70" width="79.60" height="15.32"/><rect x="858.40" y="390.02" width="79.60" height="15.32"/><rect x="858.40" y="405.34" width="79.60" height="15.32"/><rect x="858.40" y="420.66" width="79.60" height="15.32"/><rect x="858.40" y="435.98" width="79.60" height="15.32"/><rect x="858.40" y="451.30" width="79.60" height="15.32"/><rect x="858.40" y="466.62" width="79.60" height="15.32"/><rect x="858.40" y="481.94" width="79.60" height="15.32"/><rect x="858.40" y="497.26" width="79.60" height="15.32"/><rect x="858.40" y="512.58" width="79.60" height="15.32"/><rect x="858.40" y="527.90" width="79.60" height="15.32"/><rect x="858.40" y="543.22" width="79.60" height="15.32"/><rect x="858.40" y="558.54" width="79.60" height="15.32"/><rect x="858.40" y="573.86" width="79.60" height="15.32"/><rect x="858.40" y="589.18" width="79.60" height="15.32"/><rect x="321.40" y="648.70" width="92.00" height="45.90"/><rect x="321.40" y="694.60" width="92.00" height="45.90"/><rect x="321.40" y="740.50" width="92.00" height="45.90"/><rect x="418.40" y="648.70" width="92.00" height="45.90"/><rect x="418.40" y="694.60" width="92.00" height="45.90"/><rect x="418.40" y="740.50" width="92.00" height="45.90"/><rect x="555.40" y="651.20" width="78.00" height="54.10"/><rect x="555.40" y="707.40" width="78.00" height="54.10"/><rect x="636.40" y="651.20" width="78.00" height="54.10"/><rect x="636.40" y="707.40" width="78.00" height="54.10"/><rect x="758.50" y="647.30" width="92.00" height="77.20"/><rect x="758.50" y="724.50" width="92.00" height="77.20"/><rect x="854.60" y="647.30" width="92.00" height="77.20"/><rect x="854.60" y="724.50" width="92.00" height="77.20"/></g></svg>

<!-- menu bar -->
<div class="a" style="left:0;top:0;width:1366px;height:29px;background:#535353;border-bottom:1px solid #3c3c3c"></div>
<div class="a" style="left:0;top:27px;width:1366px;height:1px;background:#5a5a5a"></div>
<div class="t" style="left:8.5px;top:2px;font-size:22px;line-height:22px;color:#c99068;transform:scaleX(0.9);transform-origin:0 0;-webkit-text-stroke:0.5px #cf9870">Ai</div>
<div class="a" style="left:74px;top:4px;width:1px;height:20px;background:#5e5e5e"></div>
<div class="t" style="left:90px;top:7px">File</div>
<div class="t" style="left:123px;top:7px">Edit</div>
<div class="t" style="left:158px;top:7px">Object</div>
<div class="t" style="left:208px;top:7px">Type</div>
<div class="t" style="left:248px;top:7px">Select</div>
<div class="t" style="left:294px;top:7px">Effect</div>
<div class="t" style="left:339px;top:7px">View</div>
<div class="t" style="left:378px;top:7px">Window</div>
<div class="t" style="left:436px;top:7px">Help</div>
<div class="a" style="left:472px;top:4px;width:1px;height:20px;background:#5e5e5e"></div>
<div class="a" style="left:997px;top:0;width:1px;height:24px;background:#5e5e5e"></div>
<div class="t" style="left:1010px;top:7px;font-size:11px">Essentials</div>
<div class="a" style="left:1091px;top:0;width:1px;height:24px;background:#5e5e5e"></div>
<div class="a" style="left:1103px;top:3px;width:167px;height:20px;background:#474747;border-top:1px solid #6a6a6a;border-bottom:1px solid #5a5a5a"></div>
<div class="t" style="left:1127px;top:8px;font-size:10.5px;color:#8c8c8c">Search Adobe Stock</div>
<div class="a" style="left:1279px;top:0;width:82px;height:18px;border:1px solid #606060;border-top:none"></div>
<div class="a" style="left:1307px;top:0;width:1px;height:17px;background:#606060"></div>
<div class="a" style="left:1333px;top:0;width:1px;height:17px;background:#606060"></div>

<svg class="a" style="left:0;top:0" width="1366" height="30" viewBox="0 0 1366 30">
 <path d="M43 15 L52 6.5 L61 15 L59 15 L59 22 L54 22 L54 16 L50 16 L50 22 L45 22 L45 15 Z" fill="#d8d8d8"/>
 <rect x="485" y="7" width="8.5" height="11" fill="#d4d4d4"/>
 <rect x="494.5" y="7" width="7.5" height="5" fill="#d4d4d4"/>
 <rect x="494.5" y="13" width="7.5" height="5" fill="#d4d4d4"/>
 <path d="M511 11 L514.5 14.5 L518 11" fill="none" stroke="#d8d8d8" stroke-width="1.6"/>
 <path d="M1071.5 12 L1075 15.5 L1078.5 12" fill="none" stroke="#d8d8d8" stroke-width="1.6"/>
 <circle cx="1113" cy="11.5" r="3.6" fill="none" stroke="#c8c8c8" stroke-width="1.6"/>
 <path d="M1110.5 14 L1105.5 19" stroke="#c8c8c8" stroke-width="1.8"/>
 <path d="M1116 15.5 L1121.5 15.5 L1118.75 18.5 Z" fill="#c8c8c8"/>
 <rect x="1288" y="10" width="10" height="3" fill="#cfcfcf"/>
 <rect x="1318" y="4.5" width="8.5" height="7" fill="none" stroke="#cfcfcf" stroke-width="1.4"/>
 <rect x="1315" y="7.5" width="8.5" height="6.5" fill="#535353" stroke="#cfcfcf" stroke-width="1.4"/>
 <path d="M1344.5 4.5 L1353.5 12.5 M1353.5 4.5 L1344.5 12.5" stroke="#cfcfcf" stroke-width="2"/>
</svg>

<!-- tab bar -->
<div class="a" style="left:41px;top:29px;width:1325px;height:30px;background:#434343;border-bottom:1px solid #383838"></div>
<div class="a" style="left:42px;top:29px;width:264px;height:29px;background:#535353;border-right:2px solid #5a5a5a"></div>
<div class="t" style="left:52px;top:40px;font-size:11px;line-height:11px;font-weight:bold;color:#e8e8e8">Untitled-4 &nbsp;@</div>
<div class="t" style="left:167px;top:40px;font-size:11px;line-height:11px;font-weight:bold;color:#e8e8e8">(CMYK/GPU Preview)</div>
<svg class="a" style="left:0;top:29px" width="320" height="30" viewBox="0 29 320 30">
 <g fill="none" stroke="#e2e2e2" stroke-width="1.35" stroke-linecap="round">
  <path d="M123.4 41.9 Q123.8 44.6 124.9 44.2 Q126.1 41.9 127.2 44.2 Q128.4 42.2 130 41.9 M124.8 44.2 L125.3 48.4"/>
  <path d="M131.2 41.9 Q131.7 44.6 132.8 44.2 Q134.4 41.9 136.6 41.9 M132.7 44.2 L133.1 48.4"/>
  <path d="M139 47.6 L138.4 49.6"/>
  <path d="M141.6 41.9 Q142 44.6 142.9 44.2 Q143.8 41.9 144.7 44.2 Q145.7 42.2 146.9 41.9 M142.8 44.2 L143.2 48.4"/>
  <path d="M150.4 43 Q153.4 47.2 152.6 48.2 L148.4 48.2 Q147.6 47.2 150.4 43 Z"/>
  <path d="M155.3 48.4 L161.6 42"/>
 </g>
 <g fill="#e2e2e2"><circle cx="155.6" cy="43" r="0.9"/><circle cx="161.2" cy="47.8" r="0.9"/></g>
 <path d="M296.5 41 L303 47.5 M303 41 L296.5 47.5" stroke="#eeeeee" stroke-width="2"/>
</svg>

<!-- toolbar -->
<div class="a" style="left:0;top:29px;width:42px;height:739px;background:#535353"></div>
<div class="a" style="left:0;top:41px;width:1px;height:724px;background:#484848"></div>
<div class="a" style="left:37px;top:41px;width:1px;height:724px;background:#585858"></div>
<div class="a" style="left:39px;top:29px;width:3px;height:739px;background:#3d3d3d"></div>

<div class="a" style="left:0;top:29px;width:39px;height:12px;background:#464646;border-bottom:1px solid #3c3c3c"></div>
<svg class="a" style="left:0;top:0" width="42" height="768" viewBox="0 0 42 768">
 <path d="M6 32.5 L9.3 35.2 L6 38 Z M10 32.5 L13.3 35.2 L10 38 Z" fill="#d4d4d4"/>
 <g fill="#2e2e2e"><rect x="10" y="45.5" width="20" height="3"/></g>
 <g fill="#535353"><rect x="11" y="45.5" width="1" height="3"/><rect x="13" y="45.5" width="1" height="3"/><rect x="15" y="45.5" width="1" height="3"/><rect x="17" y="45.5" width="1" height="3"/><rect x="19" y="45.5" width="1" height="3"/><rect x="21" y="45.5" width="1" height="3"/><rect x="23" y="45.5" width="1" height="3"/><rect x="25" y="45.5" width="1" height="3"/><rect x="27" y="45.5" width="1" height="3"/><rect x="29" y="45.5" width="1" height="3"/></g>
 
<g fill="none" stroke="#d8d8d8" stroke-width="1.4" stroke-linejoin="miter">
 <path d="M15.8 65.3 L15.8 80.8 L19.7 76.9 L26.7 76.5 Z"/>
</g>
<path d="M15.6 89 L15.6 106.3 L20 101.6 L27.6 101 Z" fill="#d8d8d8"/>
<path d="M33.5 103.9 L33.5 107.2 L30.2 107.2 Z" fill="#d8d8d8"/>
<g transform="translate(25.8 115.5) rotate(45.9)"><rect x="-3.2" y="-1" width="6.4" height="3.6" fill="#d8d8d8"/><path d="M-3.6 3.4 L3.6 3.4 L4.6 8 Q3.5 15.0 0 18.8 Q-3.5 15.0 -4.6 8 Z" fill="#d8d8d8"/><path d="M0 10.3 L0 18.3" stroke="#535353" stroke-width="0.9"/><circle cx="0" cy="9.4" r="1" fill="#535353"/></g>
<path d="M33.5 127.7 L33.5 131 L30.2 131 Z" fill="#d8d8d8"/>
<g transform="translate(26.2 140.4) rotate(44.8)"><rect x="-3.2" y="-1" width="6.4" height="3.6" fill="#d8d8d8"/><path d="M-3.6 3.4 L3.6 3.4 L4.6 8 Q3.5 13.6 0 17.0 Q-3.5 13.6 -4.6 8 Z" fill="#d8d8d8"/><path d="M0 9.4 L0 16.5" stroke="#535353" stroke-width="0.9"/><circle cx="0" cy="8.5" r="1" fill="#535353"/></g>
<path d="M11.5 138.5 Q14.5 141 12 146 Q10 150 13.5 152.5" fill="none" stroke="#d8d8d8" stroke-width="1.4"/>
<rect x="12.6" y="162.7" width="15" height="12.6" fill="#5c5c5c" stroke="#dcdcdc" stroke-width="1.3"/>
<path d="M33.5 175.5 L33.5 178.8 L30.2 178.8 Z" fill="#d8d8d8"/>
<g transform="translate(27.8 185) rotate(45)">
 <path d="M-1.6 0 Q0 -1 1.6 0 L1.8 9 L-1.8 9 Z" fill="#d8d8d8"/>
 <path d="M-2.4 9.5 L2.4 9.5 L2.6 12 L-2.6 12 Z" fill="#d8d8d8"/>
 <path d="M-3 12.5 L3 12.5 Q4.2 18 1.5 22.5 L-1 22.5 Q-4 18 -3 12.5 Z" fill="#d8d8d8"/>
</g>
<path d="M33.5 199.7 L33.5 203 L30.2 203 Z" fill="#d8d8d8"/>
<path d="M12.8 210.3 L27.2 210.3 L27.2 214 L26 214 L25 212.4 L21.2 212.4 L21.2 222.2 L23 222.2 L23 224 L17 224 L17 222.2 L18.8 222.2 L18.8 212.4 L15 212.4 L14 214 L12.8 214 Z" fill="#d8d8d8"/>
<path d="M33.5 223.7 L33.5 227 L30.2 227 Z" fill="#d8d8d8"/>
<path d="M16.5 237.2 Q20 233.5 24 234.5 Q28.5 236.5 27.6 242.6" fill="none" stroke="#d8d8d8" stroke-width="1.6"/>
<path d="M12.1 234.8 L17.4 234.8 L17.4 239 L12.1 239 Z" fill="#d8d8d8"/>
<path d="M13 245 Q15 248.5 20 248.5 Q25 248.5 27 245.5" fill="none" stroke="#cfcfcf" stroke-width="1.4" stroke-dasharray="1.3 1.3"/>
<path d="M33.5 247.7 L33.5 251 L30.2 251 Z" fill="#d8d8d8"/>
<g transform="translate(19.8 264.6) rotate(45)">
 <rect x="-4.1" y="-7.4" width="8.2" height="14.8" rx="1" fill="none" stroke="#d8d8d8" stroke-width="1.4"/>
 <rect x="-4.1" y="-7.4" width="8.2" height="9.4" rx="1" fill="#d8d8d8"/>
</g>
<path d="M33.5 272.2 L33.5 275.5 L30.2 275.5 Z" fill="#d8d8d8"/>
<ellipse cx="18.5" cy="287.2" rx="6.8" ry="5" fill="none" stroke="#d8d8d8" stroke-width="1.4"/>
<g fill="#e8e8e8"><circle cx="14" cy="287.3" r="0.9"/><circle cx="16.5" cy="287.3" r="0.9"/><circle cx="19" cy="287.3" r="0.9"/><circle cx="21.5" cy="287.3" r="0.9"/></g>
<path d="M23 286 L23 297.3 L25.5 294.5 L30.5 294.2 Z" fill="#d8d8d8" stroke="#535353" stroke-width="0.6"/>
<defs><linearGradient id="gr" x1="0" x2="1"><stop offset="0" stop-color="#1a1a1a"/><stop offset="1" stop-color="#e0e0e0"/></linearGradient>
<linearGradient id="gr2" x1="0" x2="1"><stop offset="0" stop-color="#ffffff"/><stop offset="1" stop-color="#444"/></linearGradient></defs>
<rect x="12.6" y="306.6" width="15" height="13" fill="url(#gr)" stroke="#dcdcdc" stroke-width="1.3"/>
<path d="M33.5 320.2 L33.5 323.5 L30.2 323.5 Z" fill="#d8d8d8"/>
<g transform="translate(27.4 329.6) rotate(45)">
 <path d="M-2.6 0 Q0 -1.5 2.6 0 L2.6 4 L-2.6 4 Z" fill="#d8d8d8"/>
 <rect x="-3.4" y="4.2" width="6.8" height="1.8" fill="#d8d8d8"/>
 <path d="M-2.2 6.2 L2.2 6.2 L2.2 18 Q0 21 -2.2 18 Z" fill="none" stroke="#d8d8d8" stroke-width="1.4"/>
</g>
<path d="M13.2 354.6 Q15.8 352.6 17.2 356.6 Q18.6 361 22.4 358.8 Q26.4 356 28.2 358.6 Q29.6 361 29 365.5" fill="none" stroke="#d8d8d8" stroke-width="2.7" stroke-linecap="round"/>
<path d="M16 363.6 Q20 366.2 24.5 363" fill="none" stroke="#d8d8d8" stroke-width="2.4" stroke-linecap="round"/>
<circle cx="16.9" cy="361.9" r="2.5" fill="#d8d8d8"/>
<circle cx="16.9" cy="361.9" r="1.1" fill="#535353"/>
<rect x="11" y="364.8" width="3" height="3" fill="#d8d8d8"/>
<rect x="10.8" y="378.2" width="8.2" height="8" fill="#d8d8d8"/>
<circle cx="19.6" cy="384.6" r="3.9" fill="#7a7a7a" stroke="#d8d8d8" stroke-width="1.3"/>
<circle cx="24.8" cy="388.3" r="4" fill="#535353" stroke="#d8d8d8" stroke-width="1.3"/>
<path d="M15.3 400 L15.3 404.6 M9.3 405.2 L14.6 405.2" stroke="#d8d8d8" stroke-width="1.2"/>
<path d="M15.6 405.7 L24 405.7 L26.7 408.4 L26.7 415.5 L15.6 415.5 Z" fill="#5f5f5f" stroke="#d8d8d8" stroke-width="1.2"/>
<circle cx="18.2" cy="430.7" r="5.3" fill="none" stroke="#d8d8d8" stroke-width="1.7"/>
<path d="M22 434.6 L27.3 440" stroke="#d8d8d8" stroke-width="2.3" stroke-linecap="round"/>
<path d="M33.5 441.2 L33.5 444.5 L30.2 444.5 Z" fill="#d8d8d8"/>
<rect x="8.6" y="456" width="8" height="7.8" fill="#000" stroke="#ffffff" stroke-width="0.9"/>
<rect x="10.6" y="458" width="4" height="3.8" fill="#535353" stroke="#fff" stroke-width="0.7"/>
<rect x="5.6" y="452.6" width="7.8" height="7.8" fill="#fff" stroke="#000" stroke-width="1"/>
<path d="M28.5 455.5 Q34.5 455 34.8 460.5" fill="none" stroke="#bdbdbd" stroke-width="1.7"/><path d="M29.5 452.6 L25.8 455.6 L29.5 458.6 Z M31.8 460 L34.8 464 L37.8 460 Z" fill="#bdbdbd"/>
<rect x="16.3" y="480.5" width="17.8" height="17.8" fill="#fff"/>
<rect x="17.5" y="481.7" width="15.4" height="15.4" fill="#000"/>
<rect x="20.3" y="484.6" width="9.8" height="9.8" fill="#fff"/>
<rect x="21.3" y="485.6" width="7.8" height="7.8" fill="#555"/>
<rect x="5.4" y="470" width="19.2" height="19.2" fill="#000"/>
<rect x="6.2" y="470.8" width="17.6" height="17.6" fill="#fff"/>
<rect x="6.3" y="506" width="27.5" height="9.6" fill="#000"/>
<rect x="7" y="506.8" width="8" height="8" fill="#fff"/>
<rect x="15.8" y="506.8" width="8" height="8" fill="url(#gr2)"/>
<rect x="24.7" y="506.8" width="8.3" height="8" fill="#fff"/>
<path d="M25 514.6 L33 507" stroke="#d0141e" stroke-width="1.6"/>
<circle cx="18.3" cy="528.8" r="3.6" fill="none" stroke="#cfcfcf" stroke-width="1.2"/>
<rect x="19.2" y="529.6" width="5.8" height="5.4" fill="#cfcfcf"/>
<rect x="11.2" y="551.6" width="11.4" height="9" fill="#5a5a5a" stroke="#d4d4d4" stroke-width="1.2"/>
<rect x="11.2" y="551.6" width="11.4" height="1.8" fill="#d4d4d4"/>
<rect x="17.6" y="548.4" width="11" height="9" fill="#5a5a5a" stroke="#d4d4d4" stroke-width="1.2"/>
<rect x="17.6" y="548.4" width="11" height="1.8" fill="#d4d4d4"/>
<g fill="#d8d8d8"><circle cx="14.8" cy="587" r="1.5"/><circle cx="19.9" cy="587" r="1.5"/><circle cx="25" cy="587" r="1.5"/></g>

</svg>

<!-- canvas edges / scrollbars -->
<div class="a" style="left:42px;top:59px;width:1303px;height:1px;background:#6a6a6a"></div>
<div class="a" style="left:42px;top:59px;width:3px;height:691px;background:#666"></div>
<div class="a" style="left:1346px;top:59px;width:1px;height:691px;background:#686868"></div>
<div class="a" style="left:1348px;top:59px;width:1px;height:691px;background:#505050"></div>
<div class="a" style="left:1349px;top:59px;width:17px;height:706px;background:#4a4a4a;border-left:1px solid #444"></div>
<div class="a" style="left:1363px;top:59px;width:3px;height:706px;background:#424242"></div>
<svg class="a" style="left:1349px;top:59px" width="17" height="706" viewBox="1349 59 17 706">
 <path d="M1354 70 L1357.5 66.5 L1361 70" fill="none" stroke="#cfcfcf" stroke-width="1.5"/>
 <rect x="1350.5" y="398" width="13" height="24" rx="5" fill="#626262"/>
 <path d="M1354 739.5 L1357.5 743 L1361 739.5" fill="none" stroke="#cfcfcf" stroke-width="1.5"/>
</svg>

<!-- status bar -->
<div class="a" style="left:1349px;top:750px;width:17px;height:15px;background:#535353;border-top:1px solid #4a4a4a"></div>
<div class="a" style="left:1361px;top:750px;width:1px;height:15px;background:#5c5c5c"></div>
<div class="a" style="left:42px;top:750px;width:1307px;height:15px;background:#535353;border-top:1px solid #4a4a4a"></div>
<div class="a" style="left:47px;top:751px;width:49px;height:14px;background:#474747"></div>
<div class="t" style="left:49px;top:755px;font-size:10px;line-height:10px;color:#e6e6e6">32.45%</div>
<div class="a" style="left:157px;top:751px;width:40px;height:14px;background:#474747"></div>
<div class="t" style="left:160px;top:755px;font-size:10px;line-height:10px;color:#e6e6e6">1</div>
<div class="t" style="left:320px;top:756px;font-size:9.5px;line-height:10px;color:#cdcdcd">Untagged CMYK</div>
<svg class="a" style="left:0;top:748px" width="1366" height="20" viewBox="0 748 1366 20">
 <path d="M101 757 L104.5 760.5 L108 757" fill="none" stroke="#e0e0e0" stroke-width="1.6"/>
 <path d="M200 757 L203.5 760.5 L207 757" fill="none" stroke="#e0e0e0" stroke-width="1.6"/>
 <path d="M123 754 v9 M131 754 L126 758.5 L131 763 Z M146 754 L141 758.5 L146 763 Z" fill="#6c6c6c" stroke="#6c6c6c"/>
 <path d="M224 754 L229 758.5 L224 763 Z M238 754 L243 758.5 L238 763 Z M245.5 754 v9" fill="#c8c8c8" stroke="#c8c8c8"/>
 <path d="M463 754 L468 758.5 L463 763 Z" fill="#c8c8c8"/>
 <path d="M485 755 L482 758.5 L485 762" fill="none" stroke="#9a9a9a" stroke-width="1.3"/>
 <rect x="926" y="752" width="25" height="13" rx="6" fill="#5c5c5c"/>
 <path d="M1338 755 L1341 758.5 L1338 762" fill="none" stroke="#9a9a9a" stroke-width="1.3"/>
</svg>
<div class="a" style="left:0;top:765px;width:1366px;height:1px;background:#4b4f58"></div>
<div class="a" style="left:0;top:766px;width:1366px;height:1px;background:#1c2438"></div>
<div class="a" style="left:0;top:767px;width:1366px;height:1px;background:#a9b5cf"></div>
<div class="a" style="left:140px;top:767px;width:55px;height:1px;background:#f4f6fa"></div>
<div class="a" style="left:323px;top:767px;width:59px;height:1px;background:#f4f6fa"></div>
<div class="a" style="left:386px;top:767px;width:57px;height:1px;background:#f4f6fa"></div>

<!-- logo -->
<div class="a" style="left:1259px;top:659px;width:79px;height:79px;background:#fff"></div>
<svg class="a" style="left:1259px;top:659px" width="79" height="79" viewBox="0 0 79 79">
 <rect x="3.1" y="3.2" width="73.2" height="61.4" rx="2.2" fill="#14958a"/>
 <path d="M30.5 2.8 H46.8 Q46.8 13.2 55.9 13.2 L39.2 52 L23.4 13.2 Q30.5 13.2 30.5 2.8 Z" fill="#fff"/>
 <path d="M16.4 30.5 L28.8 65 H16.4 Z M63.3 30.5 L49.6 65 H63.3 Z" fill="#fff"/>
 <circle cx="39.3" cy="23" r="4.5" fill="#14958a"/>
 <rect x="38.7" y="23" width="1.2" height="29" fill="#14958a"/>
 <text x="3.1" y="75" font-family="Liberation Sans" font-weight="bold" font-size="8.6" fill="#262a48" textLength="45.8" lengthAdjust="spacingAndGlyphs">Mohtava</text>
 <text x="52.5" y="75" font-family="Liberation Sans" font-weight="bold" font-size="8.6" fill="#e35d5d" textLength="23.8" lengthAdjust="spacingAndGlyphs">Nice</text>
</svg>
</body></html>
